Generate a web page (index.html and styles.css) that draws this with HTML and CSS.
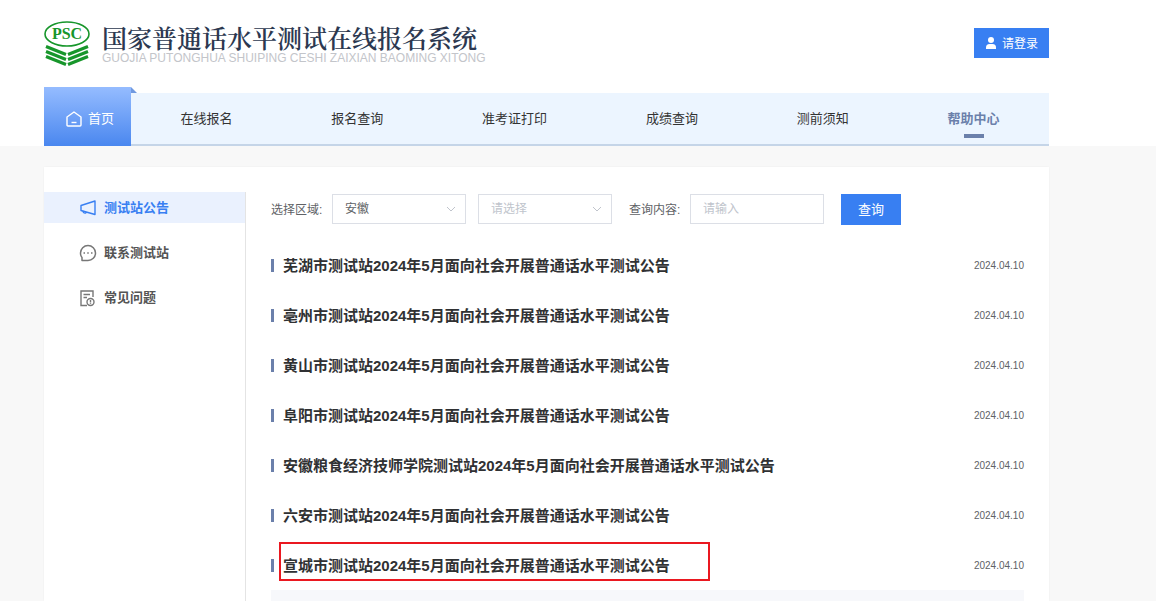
FILE: index.html
```
<!DOCTYPE html>
<html lang="zh-CN">
<head>
    <meta charset="UTF-8">
    <meta name="viewport" content="width=device-width, initial-scale=1.0">
    <title>国家普通话水平测试在线报名系统</title>
    <link rel="stylesheet" href="styles.css">
</head>
<body>

<header class="header">
    <div class="top">
        <a class="brand" href="#">
            <svg class="logo" viewBox="0 0 46 46" width="46" height="46" aria-hidden="true">
                <ellipse cx="23" cy="14" rx="22" ry="12" fill="#fff" stroke="#17962b" stroke-width="1.600"/>
                <text class="logo-text" x="23" y="19" text-anchor="middle">PSC</text>
                <g fill="none" stroke="#17962b" stroke-width="3.200">
                    <path d="M2 26.500 L22 34.500 M2 31.500 L22 39.500 M2 36.500 L22 44.500"/>
                    <path d="M44 26.500 L24 34.500 M44 31.500 L24 39.500 M44 36.500 L24 44.500"/>
                </g>
            </svg>
            <span class="brand-name">
                <span class="brand-cn">国家普通话水平测试在线报名系统</span>
                <span class="brand-en">GUOJIA PUTONGHUA SHUIPING CESHI ZAIXIAN BAOMING XITONG</span>
            </span>
        </a>
        <button class="login" type="button">
            <svg viewBox="0 0 12 12" width="12" height="12" fill="#fff" aria-hidden="true">
                <circle cx="6" cy="3" r="3"/>
                <path d="M1 12 V10.500 Q1 7 4.500 7 H7.500 Q11 7 11 10.500 V12 Z"/>
            </svg>
            <span>请登录</span>
        </button>
    </div>

    <nav class="nav">
        <a class="home" href="#">
            <svg viewBox="0 0 16 16" width="16" height="16" fill="none" stroke="#fff" stroke-width="1.400" stroke-linejoin="round" aria-hidden="true">
                <path d="M1 6 L8 1 L15 6 V14 Q15 15 14 15 H2 Q1 15 1 14 Z"/>
                <path d="M5.500 11.500 H10.500"/>
            </svg>
            <span>首页</span>
        </a>
        <div class="menu">
            <a href="#">在线报名</a>
            <a href="#">报名查询</a>
            <a href="#">准考证打印</a>
            <a href="#">成绩查询</a>
            <a href="#">测前须知</a>
            <a class="current" href="#">帮助中心</a>
        </div>
    </nav>
</header>

<main class="panel">
    <!-- 左侧菜单 -->
    <aside class="side">
        <a class="side-item active" href="#">
            <svg viewBox="0 0 18 18" width="18" height="18" fill="none" stroke="currentColor" stroke-width="1.400" stroke-linejoin="round" aria-hidden="true">
                <path d="M2 6.500 L16 2 V15.500 L2 11.500 Z"/>
                <path d="M4 12 Q4.500 14.500 6.500 14 Q7.500 13.800 7.500 13"/>
            </svg>
            <span>测试站公告</span>
        </a>
        <a class="side-item" href="#">
            <svg viewBox="0 0 18 18" width="18" height="18" fill="none" stroke="#777" stroke-width="1.500" aria-hidden="true">
                <path d="M3 16.500 H9 A7.500 7.500 0 1 0 1.500 9 Q1.500 12 3 13.500 Z" stroke-linejoin="round"/>
                <path d="M4.500 9 H6 M8.250 9 H9.750 M12 9 H13.500"/>
            </svg>
            <span>联系测试站</span>
        </a>
        <a class="side-item" href="#">
            <svg viewBox="0 0 18 18" width="18" height="18" fill="none" stroke="#777" stroke-width="1.400" aria-hidden="true">
                <path d="M14 8 V2 H2 V16.500 H8 M4.500 5.500 H11 M4.500 8.500 H8"/>
                <circle cx="11.500" cy="13" r="3.500"/>
                <path d="M11.500 11 V13.500 M11.500 14.200 V15"/>
            </svg>
            <span>常见问题</span>
        </a>
    </aside>

    <section class="content">
        <!-- 查询条件 -->
        <form class="filter">
            <label for="province">选择区域:</label>
            <select id="province" class="field">
                <option>安徽</option>
            </select>
            <select class="field empty" aria-label="请选择">
                <option>请选择</option>
            </select>
            <label class="label-query" for="keyword">查询内容:</label>
            <input id="keyword" class="field" type="text" placeholder="请输入">
            <button class="search" type="button">查询</button>
        </form>

        <!-- 公告列表 -->
        <ul class="list">
            <li><a href="#">芜湖市测试站2024年5月面向社会开展普通话水平测试公告</a><time>2024.04.10</time></li>
            <li><a href="#">亳州市测试站2024年5月面向社会开展普通话水平测试公告</a><time>2024.04.10</time></li>
            <li><a href="#">黄山市测试站2024年5月面向社会开展普通话水平测试公告</a><time>2024.04.10</time></li>
            <li><a href="#">阜阳市测试站2024年5月面向社会开展普通话水平测试公告</a><time>2024.04.10</time></li>
            <li><a href="#">安徽粮食经济技师学院测试站2024年5月面向社会开展普通话水平测试公告</a><time>2024.04.10</time></li>
            <li><a href="#">六安市测试站2024年5月面向社会开展普通话水平测试公告</a><time>2024.04.10</time></li>
            <li class="marked"><a href="#">宣城市测试站2024年5月面向社会开展普通话水平测试公告</a><time>2024.04.10</time></li>
        </ul>
        <div class="list-footer"></div>
    </section>
</main>

</body>
</html>
```
FILE: styles.css
```
*,
*::before,
*::after {
    box-sizing: border-box;
}
body {
    margin: 0;
    min-height: 100vh;
    display: flex;
    flex-direction: column;
    font-family: "Liberation Sans", "Noto Sans CJK SC", sans-serif;
    font-size: 13px;
    color: #333;
    background-color: #f8f8f8;
}
a {
    color: inherit;
    text-decoration: none;
}
button {
    border: 0;
    padding: 0;
    font-family: inherit;
    color: #fff;
    background-color: #387ff2;
    cursor: pointer;
}

/* 头部 */
.header {
    padding: 0 107px 0 44px;
    background-color: #fff;
}
.top {
    display: flex;
    justify-content: space-between;
    align-items: center;
    height: 87px;
    padding-bottom: 1px;
}
.brand {
    display: flex;
    align-items: center;
    gap: 12px;
}
.logo-text {
    font-family: "Liberation Serif", serif;
    font-size: 16px;
    font-weight: bold;
    fill: #17962b;
}
.brand-name {
    display: flex;
    flex-direction: column;
    white-space: nowrap;
}
.brand-cn {
    font-family: "Noto Serif CJK SC", "Noto Sans CJK SC", serif;
    font-size: 25px;
    font-weight: 600;
    line-height: 28px;
    color: #2c3850;
}
.brand-en {
    padding-top: 2px;
    font-size: 12px;
    line-height: 10px;
    color: #c3c5ca;
}
.login {
    display: flex;
    justify-content: center;
    align-items: center;
    gap: 5px;
    width: 75px;
    height: 30px;
    font-size: 12px;
}
.login span {
    padding-bottom: 2px;
}

/* 导航 */
.nav {
    display: flex;
    align-items: flex-end;
}
.home {
    position: relative;
    display: flex;
    justify-content: center;
    align-items: center;
    gap: 6px;
    width: 87px;
    height: 59px;
    padding: 4px 0 0 5px;
    color: #fff;
    background: linear-gradient(#95bcff, #4a87ef);
}
.home span {
    padding-bottom: 2px;
}
.home::after {
    content: "";
    position: absolute;
    left: 100%;
    top: 0;
    width: 6px;
    height: 6px;
    background-color: #7099e0;
    clip-path: polygon(0 0, 100% 100%, 0 100%);
}
.menu {
    flex: 1;
    display: flex;
    height: 53px;
    background-color: #ecf5ff;
    border-bottom: 2px solid #c5d5e8;
}
.menu a {
    flex: 1 1 auto;
    display: flex;
    justify-content: center;
    align-items: center;
    padding-bottom: 2px;
}
.menu .current {
    position: relative;
    font-weight: bold;
    color: #6b80ab;
}
.current::after {
    content: "";
    position: absolute;
    left: 50%;
    bottom: 6px;
    width: 20px;
    height: 4px;
    margin-left: -10px;
    background-color: #6b80ab;
}

/* 主体 */
.panel {
    flex: 1;
    display: flex;
    margin: 21px 107px 0 44px;
    padding-top: 25px;
    background-color: #fff;
    box-shadow: 0 0 2px rgba(0, 0, 0, 0.05);
}
.side {
    display: flex;
    flex-direction: column;
    gap: 14px;
    width: 202px;
    border-right: 1px solid #e4e4e4;
}
.side-item {
    display: flex;
    align-items: center;
    gap: 7px;
    height: 31px;
    padding-left: 35px;
    font-weight: bold;
    color: #555;
}
.side-item span {
    padding-bottom: 2px;
}
.side-item.active {
    color: #387ff2;
    background-color: #eaf1fe;
}
.content {
    flex: 1;
    display: flex;
    flex-direction: column;
    padding: 2px 25px 0;
}

/* 查询条件 */
.filter {
    display: flex;
    align-items: center;
    height: 31px;
    margin-bottom: 15px;
    font-size: 12px;
    color: #606266;
}
.filter label {
    width: 61px;
    padding-bottom: 2px;
}
.filter .label-query {
    margin-left: 5px;
}
.field {
    width: 134px;
    height: 30px;
    margin: 0 12px 1px 0;
    padding: 0 12px;
    border: 1px solid #dcdfe6;
    border-radius: 0;
    font-family: inherit;
    font-size: 12px;
    color: #606266;
    background-color: #fff;
}
select.field {
    appearance: none;
    background-image: url("data:image/svg+xml,%3Csvg xmlns='http://www.w3.org/2000/svg' viewBox='0 0 10 6'%3E%3Cpath d='M1 1l4 4 4-4' fill='none' stroke='%23c0c4cc'/%3E%3C/svg%3E");
    background-repeat: no-repeat;
    background-position: right 9px center;
    background-size: 10px 6px;
}
select.empty,
.field::placeholder {
    color: #c0c4cc;
}
.search {
    width: 60px;
    height: 31px;
    margin-left: 5px;
    padding-bottom: 2px;
    font-size: 13px;
}

/* 公告列表 */
.list {
    margin: 0;
    padding: 0;
    list-style: none;
}
.list li {
    position: relative;
    display: flex;
    align-items: center;
    height: 50px;
}
.list li::before {
    content: "";
    width: 3px;
    height: 13px;
    margin-right: 9px;
    background-color: #6b80ab;
}
.list a {
    padding-bottom: 2px;
    font-size: 15px;
    font-weight: bold;
    color: #303133;
}
.list time {
    margin-left: auto;
    font-size: 10px;
    color: #606266;
}
.marked::after {
    content: "";
    position: absolute;
    left: 8px;
    top: 2px;
    width: 431px;
    height: 39px;
    border: 2px solid #ea1820;
}
.list-footer {
    flex: 1;
    background-color: #f7f8fb;
}
```
